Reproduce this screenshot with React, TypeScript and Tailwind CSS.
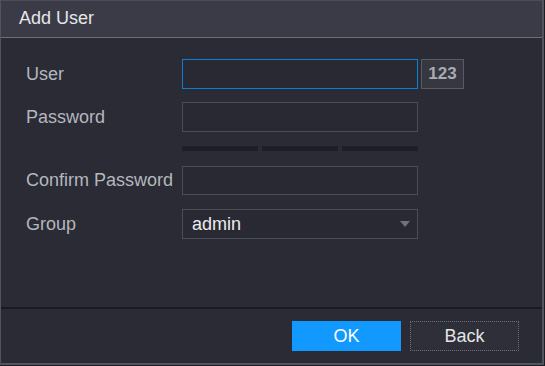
import React from 'react';

function Field({ label, children }: { label: string; children: React.ReactNode }) {
  return (
    <div className="flex items-center">
      <div className="w-[156px] shrink-0 text-[18px] text-[#b4b7be]">{label}</div>
      {children}
    </div>
  );
}

export default function App() {
  return (
    <div className="w-[545px] h-[366px] bg-[#1c1d23] font-['Liberation_Sans',Arial,sans-serif]">
      <div className="w-[544px] h-[365px] flex flex-col bg-[#2a2b34] border-l border-r-2 border-b-2 border-[#50555d]">
        <div className="h-[38px] shrink-0 bg-[#3a3b46] border-t border-b border-t-[#4a4d56] border-b-[#6c7079] flex items-center pl-[18px] pb-[1px] text-[18px] text-[#e6e6e6]">
          Add User
        </div>

        <div className="flex-1 flex flex-col pl-[25px] pt-[21px]">
          <Field label="User">
            <div className="w-[236px] h-[30px] border border-[#0a80d4] bg-[#282932]" />
            <div className="ml-[3px] w-[43px] h-[30px] border border-[#595b63] bg-[#363741] flex items-center justify-center text-[17px] font-bold text-[#a9abb2]">
              123
            </div>
          </Field>

          <div className="mt-[13px]">
            <Field label="Password">
              <div className="w-[236px] h-[30px] border border-[#4b4d55] bg-[#282932]" />
            </Field>
          </div>

          <div className="mt-[14px] ml-[156px] flex gap-[4px]">
            <div className="w-[76px] h-[5px] bg-[#1e1f26]" />
            <div className="w-[76px] h-[5px] bg-[#1e1f26]" />
            <div className="w-[76px] h-[5px] bg-[#1e1f26]" />
          </div>

          <div className="mt-[15px]">
            <Field label="Confirm Password">
              <div className="w-[236px] h-[29px] border border-[#4b4d55] bg-[#282932]" />
            </Field>
          </div>

          <div className="mt-[14px]">
            <Field label="Group">
              <div className="w-[236px] h-[30px] border border-[#4b4d55] bg-[#282932] flex items-center justify-between pl-[9px] pr-[7px]">
                <span className="text-[18px] text-[#ececec]">admin</span>
                <svg width="10" height="6" viewBox="0 0 10 6">
                  <path d="M0 0 L10 0 L5 6 Z" fill="#6f727a" />
                </svg>
              </div>
            </Field>
          </div>
        </div>

        <div className="h-[2px] shrink-0 bg-[#1a1b21]" />

        <div className="h-[54px] shrink-0 flex items-start justify-end pt-[12px] pr-[23px] gap-[9px]">
          <div className="w-[109px] h-[30px] bg-[#1199ff] flex items-center justify-center text-[18px] text-white">
            OK
          </div>
          <div className="w-[109px] h-[30px] bg-[#2e2f38] border border-dotted border-[#6a6d75] flex items-center justify-center text-[18px] text-[#e4e4e4]">
            Back
          </div>
        </div>
      </div>
    </div>
  );
}
